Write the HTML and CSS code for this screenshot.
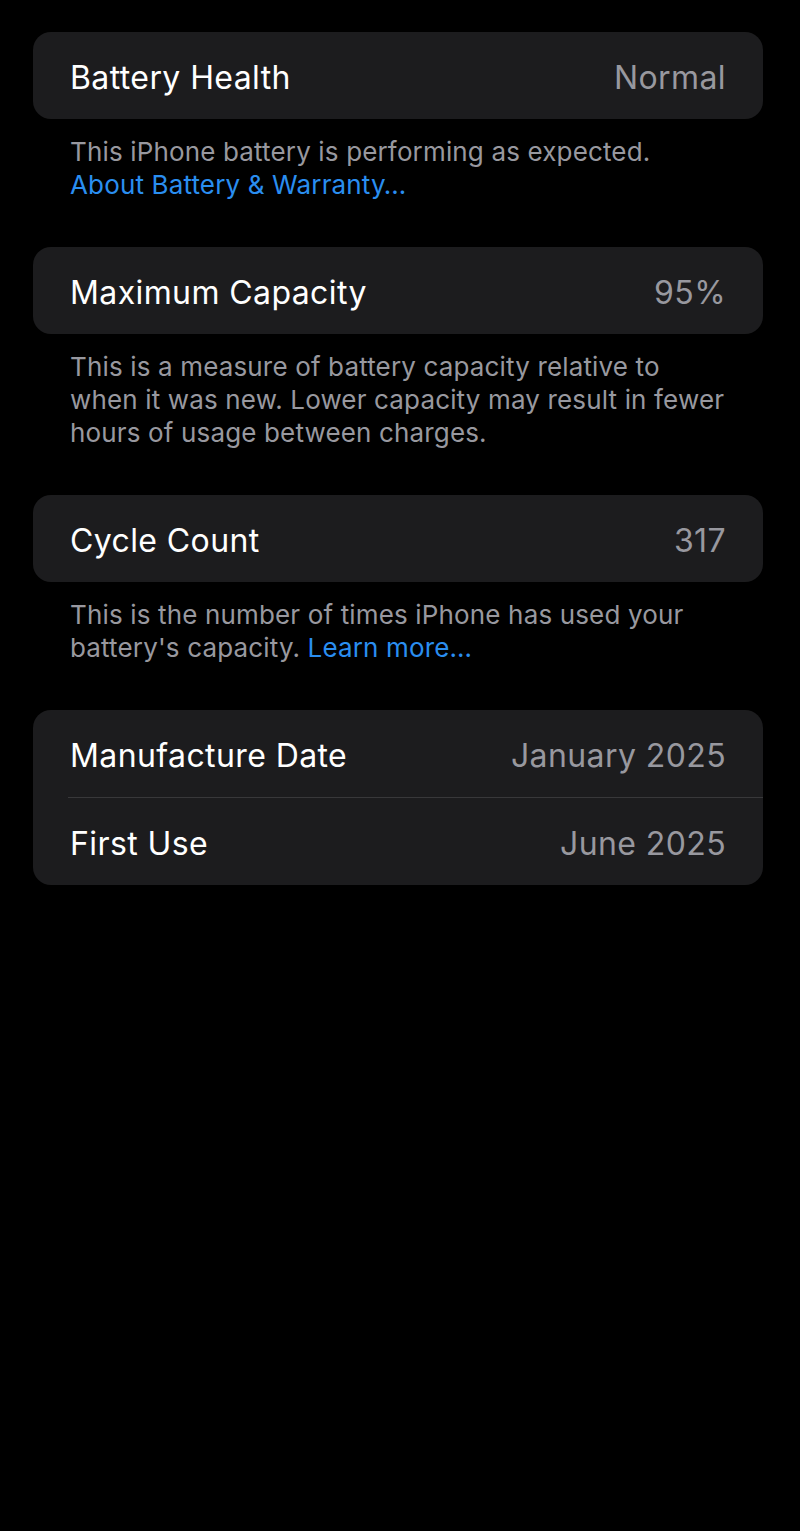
FILE: index.html
```html
<!DOCTYPE html>
<html lang="en">
<head>
<meta charset="utf-8">
<title>Battery Health</title>
<link rel="stylesheet" href="styles.css">
</head>
<body>
<main class="page">
  <section class="group">
    <div class="card">
      <div class="row"><span class="label">Battery Health</span><span class="value">Normal</span></div>
    </div>
    <p class="footer">This iPhone battery is performing as expected.<br><a class="link" href="#">About Battery &amp; Warranty…</a></p>
  </section>

  <section class="group">
    <div class="card">
      <div class="row"><span class="label">Maximum Capacity</span><span class="value">95%</span></div>
    </div>
    <p class="footer">This is a measure of battery capacity relative to<br>when it was new. Lower capacity may result in fewer<br>hours of usage between charges.</p>
  </section>

  <section class="group">
    <div class="card">
      <div class="row"><span class="label">Cycle Count</span><span class="value">317</span></div>
    </div>
    <p class="footer">This is the number of times iPhone has used your<br>battery's capacity. <a class="link" href="#">Learn more…</a></p>
  </section>

  <section class="group">
    <div class="card">
      <div class="row"><span class="label">Manufacture Date</span><span class="value">January 2025</span></div>
      <div class="divider"></div>
      <div class="row"><span class="label">First Use</span><span class="value">June 2025</span></div>
    </div>
  </section>
</main>
</body>
</html>
```

FILE: styles.css
```css
html, body {
  margin: 0;
  padding: 0;
  background: #000;
}
body {
  font-family: Inter, "Noto Sans", "Liberation Sans", sans-serif;
  color: #fff;
  -webkit-font-smoothing: antialiased;
}
.page {
  padding: 32px 37px 0 33px;
  display: flex;
  flex-direction: column;
}
.group {
  margin-bottom: 46px;
}
.card {
  background: #1c1c1e;
  border-radius: 18px;
  overflow: hidden;
}
.row {
  box-sizing: border-box;
  height: 87px;
  display: flex;
  align-items: center;
  justify-content: space-between;
  padding: 3px 37px 0;
  font-size: 32px;
  letter-spacing: 0.4px;
}
.label {
  color: #fff;
}
.value {
  color: #98989f;
}
.divider {
  height: 1px;
  background: #38383a;
  margin-left: 35px;
}
.footer {
  margin: 0;
  padding: 16px 0 0 37px;
  font-size: 26px;
  line-height: 33px;
  letter-spacing: 0.15px;
  white-space: nowrap;
  color: #98989f;
}
.link {
  color: #2a8ef0;
  text-decoration: none;
}
```
